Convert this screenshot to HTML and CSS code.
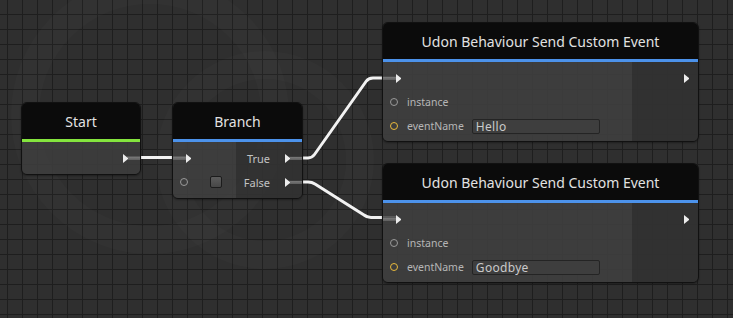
FILE: index.html
```html
<!DOCTYPE html>
<html lang="en">
<head>
    <meta charset="UTF-8">
    <title>Udon Graph</title>
    <link rel="stylesheet" href="styles.css">
</head>
<body>
    <div class="graph">
        <!-- faint logo behind the grid -->
        <svg class="backdrop" width="733" height="318">
            <circle cx="150" cy="115" r="125" />
            <circle cx="265" cy="160" r="95" />
        </svg>

        <!-- edges -->
        <svg class="wires" width="733" height="318">
            <path d="M127 157.5 L186 157.5" />
            <path d="M289 158 L308 158 Q312 158 314.5 154.5 L366 81.5 Q368.5 78 373 78 L396 78" />
            <path d="M289 182 L308 182 Q312 182 315 184 L364 215 Q367 217.5 371 217.5 L396 217.5" />
        </svg>

        <div class="node node-start">
            <div class="node-title">Start</div>
            <div class="title-bar bar-event"></div>
            <div class="node-body">
                <div class="outputs full">
                    <div class="port port-out">
                        <span class="exec"></span><span class="stub"></span>
                    </div>
                </div>
            </div>
        </div>

        <div class="node node-branch">
            <div class="node-title">Branch</div>
            <div class="title-bar"></div>
            <div class="node-body">
                <div class="inputs">
                    <div class="port port-in">
                        <span class="stub stub-in"></span><span class="exec"></span>
                    </div>
                    <div class="port port-in">
                        <span class="pin"></span><span class="toggle"></span>
                    </div>
                </div>
                <div class="outputs">
                    <div class="port port-out">
                        <span class="label">True</span><span class="exec"></span><span class="stub"></span>
                    </div>
                    <div class="port port-out">
                        <span class="label">False</span><span class="exec"></span><span class="stub"></span>
                    </div>
                </div>
            </div>
        </div>

        <div class="node node-send send-top">
            <div class="node-title">Udon Behaviour Send Custom Event</div>
            <div class="title-bar"></div>
            <div class="node-body">
                <div class="inputs">
                    <div class="port port-in">
                        <span class="stub stub-in"></span><span class="exec"></span>
                    </div>
                    <div class="port port-in">
                        <span class="pin"></span><span class="label">instance</span>
                    </div>
                    <div class="port port-in">
                        <span class="pin pin-string"></span><span class="label">eventName</span>
                        <span class="field">Hello</span>
                    </div>
                </div>
                <div class="outputs">
                    <div class="port port-out">
                        <span class="exec exec-free"></span>
                    </div>
                </div>
            </div>
        </div>

        <div class="node node-send send-bottom">
            <div class="node-title">Udon Behaviour Send Custom Event</div>
            <div class="title-bar"></div>
            <div class="node-body">
                <div class="inputs">
                    <div class="port port-in">
                        <span class="stub stub-in"></span><span class="exec"></span>
                    </div>
                    <div class="port port-in">
                        <span class="pin"></span><span class="label">instance</span>
                    </div>
                    <div class="port port-in">
                        <span class="pin pin-string"></span><span class="label">eventName</span>
                        <span class="field">Goodbye</span>
                    </div>
                </div>
                <div class="outputs">
                    <div class="port port-out">
                        <span class="exec exec-free"></span>
                    </div>
                </div>
            </div>
        </div>
    </div>
</body>
</html>
```

FILE: styles.css
```css
/* Base */
* {
    margin: 0;
    padding: 0;
    box-sizing: border-box;
}

body {
    background-color: #2f2f2f;
    font-family: 'Noto Sans', 'Open Sans', sans-serif;
}

/* Grid canvas */
.graph {
    position: relative;
    width: 733px;
    height: 318px;
    overflow: hidden;
    background-color: #2f2f2f;
    background-image:
        linear-gradient(to right, #1e1e1e 1px, transparent 1px),
        linear-gradient(to bottom, #1e1e1e 1px, transparent 1px);
    background-size: 15px 15px;
    background-position: 7px 14px;
}

.backdrop,
.wires {
    position: absolute;
    top: 0;
    left: 0;
}

.backdrop circle {
    fill: none;
    stroke: rgba(255, 255, 255, 0.014);
    stroke-width: 28;
}

.wires path {
    fill: none;
    stroke: #f2f2f2;
    stroke-width: 3;
    stroke-linejoin: round;
}

/* Nodes */
.node {
    position: absolute;
    display: flex;
    flex-direction: column;
    border: 1px solid #111;
    border-radius: 6px;
    overflow: hidden;
    box-shadow: 0 1px 2px rgba(0, 0, 0, 0.35);
}

.node-start {
    left: 21px;
    top: 102px;
    width: 120px;
}

.node-branch {
    left: 172px;
    top: 102px;
    width: 131px;
}

.node-send {
    left: 382px;
    width: 317px;
}

.send-top {
    top: 22px;
}

.send-bottom {
    top: 163px;
}

.node-title {
    height: 36px;
    display: flex;
    align-items: center;
    justify-content: center;
    background-color: #0b0b0b;
    color: #e2e2e2;
    font-size: 14px;
}

.title-bar {
    height: 3px;
    background-color: #4c92ea;
}

.bar-event {
    background-color: #84e43e;
}

.node-body {
    display: flex;
}

.inputs {
    flex: 1;
    padding: 4px 0 3px;
    background-color: rgba(64, 64, 64, 0.86);
}

.outputs {
    width: 66px;
    padding: 4px 0 3px;
    background-color: rgba(50, 50, 50, 0.9);
}

.outputs.full {
    flex: 1;
    padding-bottom: 4px;
    background-color: rgba(62, 62, 62, 0.86);
}

.node-branch .inputs,
.node-branch .outputs {
    padding-bottom: 4px;
}

/* Ports */
.port {
    height: 24px;
    display: flex;
    align-items: center;
}

.port-out {
    justify-content: flex-end;
}

.exec {
    width: 5px;
    height: 9px;
    border-left: 5px solid #ececec;
    border-top: 4.5px solid transparent;
    border-bottom: 4.5px solid transparent;
}

.exec-free {
    margin-right: 9px;
}

.stub {
    width: 12px;
    height: 3px;
    background: linear-gradient(to bottom, #7a7a7a, #5e5e5e);
}

.stub-in {
    width: 13px;
}

.pin {
    width: 8px;
    height: 8px;
    margin-left: 7px;
    margin-right: 9px;
    border: 1px solid #9a9a9a;
    border-radius: 50%;
}

.pin-string {
    border-color: #e8b93c;
}

.toggle {
    width: 12px;
    height: 12px;
    margin-left: 13px;
    border: 1px solid #1c1c1c;
    border-radius: 2px;
    background: linear-gradient(to bottom, #5c5c5c, #474747);
}

.label {
    font-size: 10.5px;
    color: #b6b6b6;
}

.port-out .label {
    margin-right: 15px;
    font-size: 11px;
    color: #c2c2c2;
}

.field {
    width: 128px;
    height: 15px;
    margin-left: 8px;
    padding-left: 3px;
    display: flex;
    align-items: center;
    background-color: #3e3e3e;
    border: 1px solid #242424;
    border-radius: 2px;
    color: #cacaca;
    font-size: 12px;
    letter-spacing: 0.3px;
}
```
